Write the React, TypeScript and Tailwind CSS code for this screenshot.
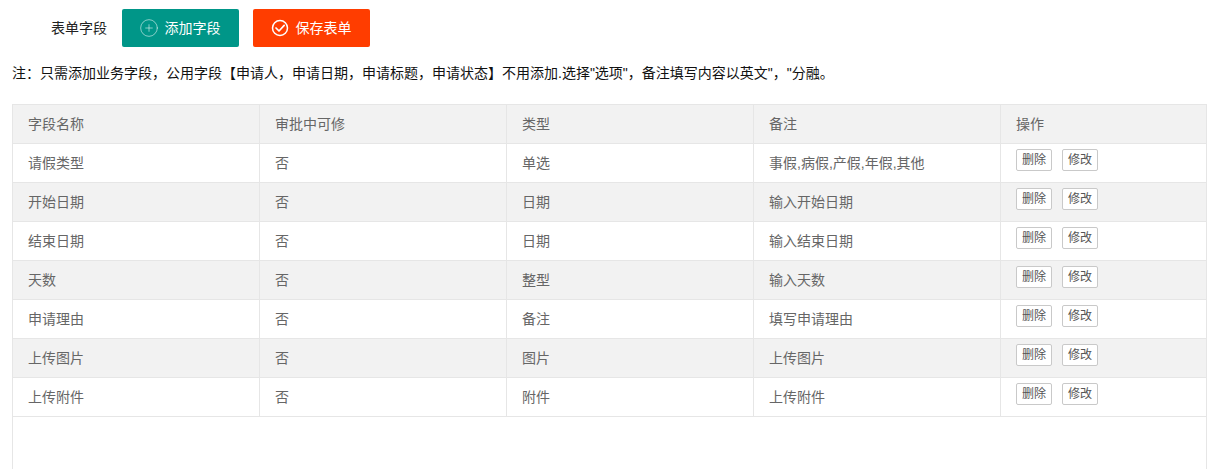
import { CirclePlus } from "lucide-react";

const rows = [
  ["请假类型", "否", "单选", "事假,病假,产假,年假,其他"],
  ["开始日期", "否", "日期", "输入开始日期"],
  ["结束日期", "否", "日期", "输入结束日期"],
  ["天数", "否", "整型", "输入天数"],
  ["申请理由", "否", "备注", "填写申请理由"],
  ["上传图片", "否", "图片", "上传图片"],
  ["上传附件", "否", "附件", "上传附件"],
];

const headers = ["字段名称", "审批中可修", "类型", "备注", "操作"];

// full-width colon and comma, written as escapes so they stay full-width
const note =
  '注\uFF1A只需添加业务字段\uFF0C公用字段【申请人\uFF0C申请日期\uFF0C申请标题\uFF0C申请状态】不用添加.选择"选项"\uFF0C备注填写内容以英文"\uFF0C"分融。';

const fontCls = "font-['Liberation_Sans','Noto_Sans_CJK_SC',sans-serif]";
const cellCls = "h-[39px] border border-[#e6e6e6] px-[15px] py-0 text-left align-middle font-normal";
const btnCls = "flex h-[38px] w-[117px] items-center justify-center gap-1.5 rounded-[2px] pr-0.5 text-sm text-white";
const miniCls = "h-[22px] w-9 rounded-[2px] border border-[#c9c9c9] bg-white text-xs text-[#555]";

function CheckCircle() {
  return (
    <svg width="20" height="20" viewBox="0 0 20 20" fill="none" stroke="currentColor" strokeWidth="1.5">
      <circle cx="10" cy="10" r="7.5" />
      <path d="M6 10l3 3 5.2-5.6" strokeWidth="1.7" strokeLinecap="round" strokeLinejoin="round" />
    </svg>
  );
}

export default function App() {
  return (
    <div className={`h-[469px] overflow-hidden bg-white ${fontCls}`}>
      <div className="flex items-center pl-[51px] pt-[9px]">
        <span className="w-[71px] text-sm text-[#222]">表单字段</span>
        <button className={`${btnCls} bg-[#009688]`}>
          <CirclePlus size={20} strokeWidth={0.9} className="text-white/70" />
          添加字段
        </button>
        <button className={`${btnCls} ml-[14px] bg-[#ff3d00]`}>
          <CheckCircle />
          保存表单
        </button>
      </div>

      <p className="mt-[16px] pl-3 text-sm leading-[20px] text-[#111]">{note}</p>

      <div className="ml-3 mt-[21px] h-[400px] w-[1195px] border-x border-[#e6e6e6]">
        <table className="-mx-px w-[1195px] table-fixed border-collapse text-sm text-[#666]">
          <colgroup>
            <col className="w-[247px]" />
            <col className="w-[247px]" />
            <col className="w-[247px]" />
            <col className="w-[247px]" />
            <col />
          </colgroup>
          <thead>
            <tr className="bg-[#f2f2f2]">
              {headers.map((h) => (
                <th key={h} className={cellCls}>
                  {h}
                </th>
              ))}
            </tr>
          </thead>
          <tbody>
            {rows.map((row, i) => (
              <tr key={row[0]} className={i % 2 === 1 ? "bg-[#f2f2f2]" : "bg-white"}>
                {row.map((c, j) => (
                  <td key={j} className={cellCls}>
                    {c}
                  </td>
                ))}
                <td className={cellCls}>
                  <div className="flex gap-[10px] pb-[6px]">
                    <button className={miniCls}>删除</button>
                    <button className={miniCls}>修改</button>
                  </div>
                </td>
              </tr>
            ))}
          </tbody>
        </table>
      </div>
    </div>
  );
}
